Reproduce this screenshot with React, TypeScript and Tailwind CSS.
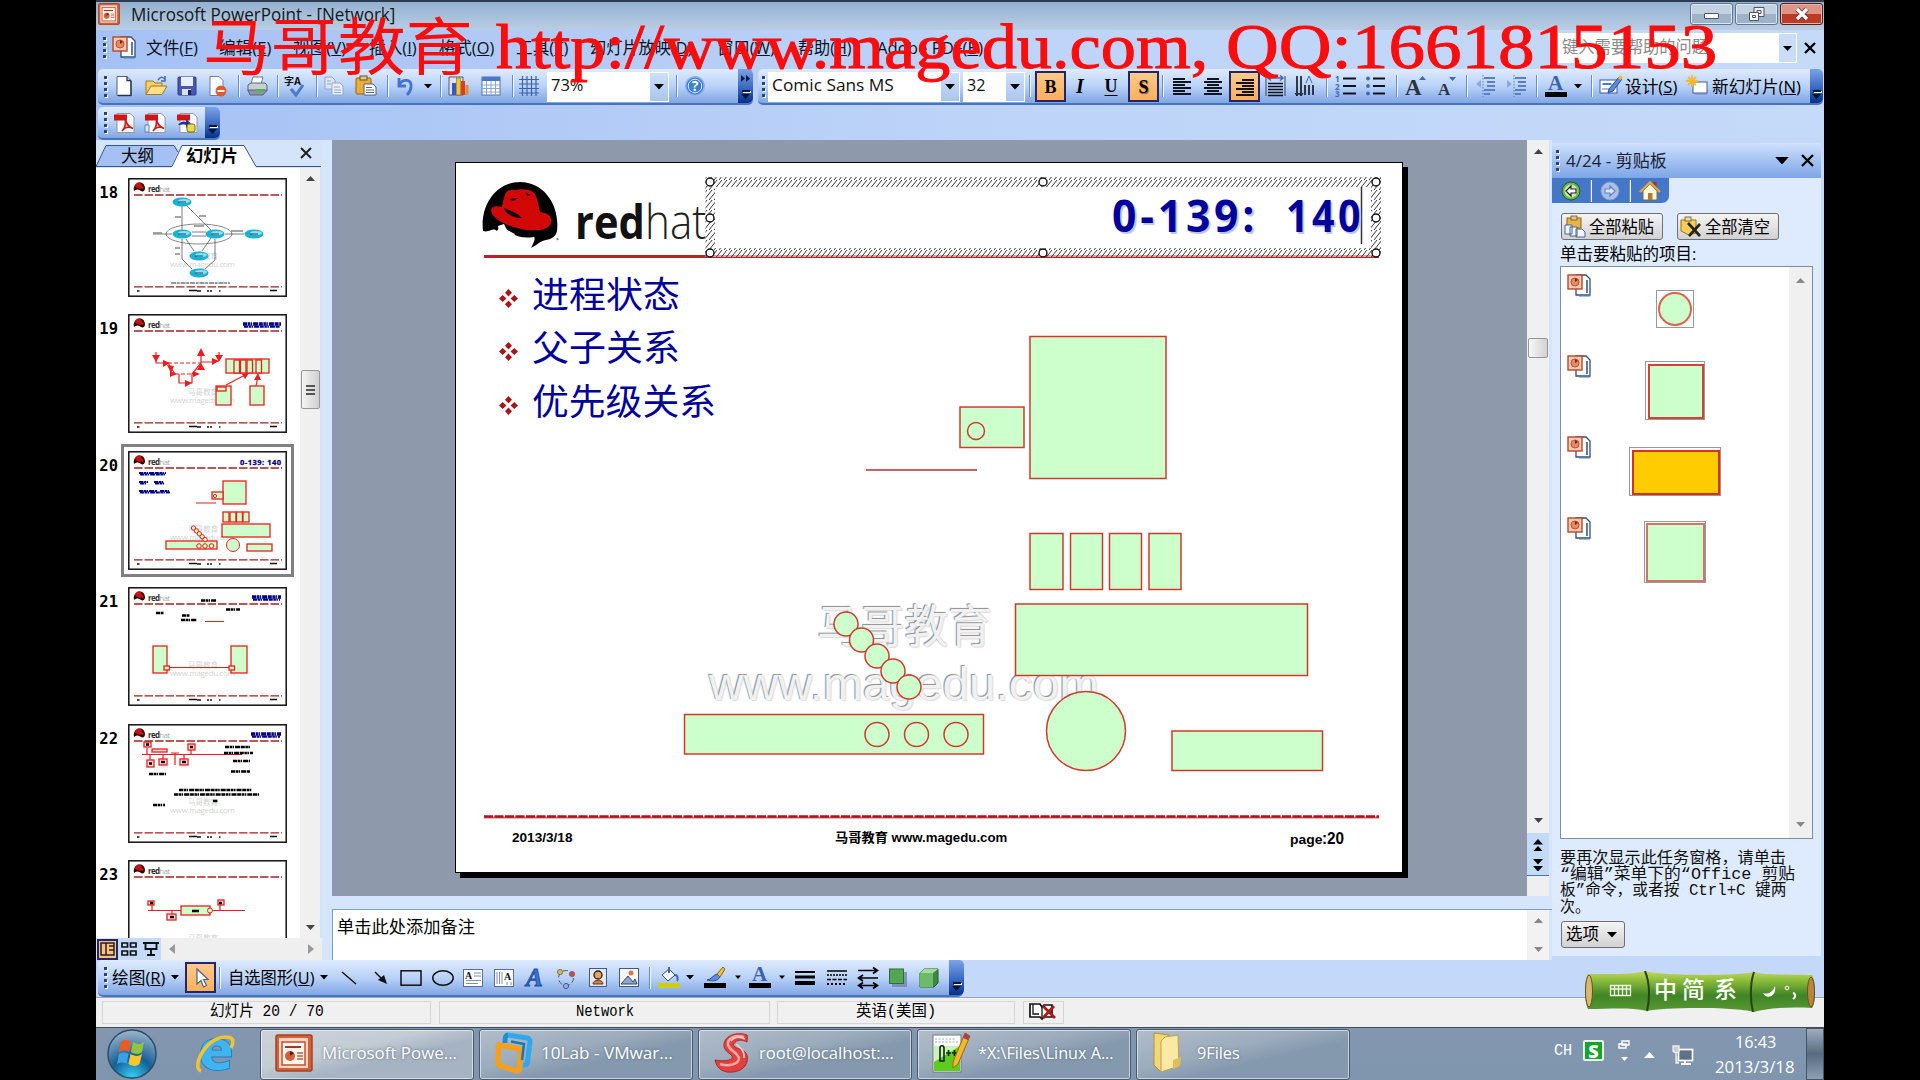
import React, { useLayoutEffect, useRef, useState } from "react";

type Kids = { children?: React.ReactNode };

/* Squeezes or stretches a line of text so that it fills exactly w pixels. */
function Fit({ w, c = "", children }: { w: number; c?: string } & Kids) {
  const ref = useRef<HTMLSpanElement>(null);
  const [k, setK] = useState(1);
  useLayoutEffect(() => {
    if (ref.current) setK(w / ref.current.offsetWidth);
  }, [w]);
  return (
    <span className={"block shrink-0 whitespace-nowrap " + c} style={{ width: w }}>
      <span ref={ref} className="inline-block origin-left" style={{ transform: `scaleX(${k})` }}>
        {children}
      </span>
    </span>
  );
}

const Cell = ({ c, children }: { c: string } & Kids) => (
  <div className={"flex shrink-0 items-center justify-center " + c}>{children}</div>
);
const Sep = ({ c }: { c: string }) => (
  <Cell c={c}>
    <div className="h-[22px] w-px bg-[#6a8ccb]" />
    <div className="h-[22px] w-px bg-[#f1f9ff]" />
  </Cell>
);
const Dots = ({ c }: { c: string }) => (
  <Cell c={c}>
    <div className="flex flex-col gap-[3px]">
      {[0, 1, 2, 3].map((i) => (
        <div key={i} className="h-[3px] w-[3px] bg-[#27417f] shadow-[1px_1px_0_#fff]" />
      ))}
    </div>
  </Cell>
);
const Tri = ({ c = "", up = false, s = 9, f = "#000" }: { c?: string; up?: boolean; s?: number; f?: string }) => (
  <svg width={s} height={s / 2 + 0.5} viewBox="0 0 10 5.5" className={c}>
    <path d={up ? "M0 5.5L5 0L10 5.5Z" : "M0 0L5 5.5L10 0Z"} fill={f} />
  </svg>
);
const Arr = ({ c }: { c: string }) => (
  <Cell c={c}>
    <Tri s={8} />
  </Cell>
);
const I = ({ w = 22, h = 22, c = "", children }: { w?: number; h?: number; c?: string } & Kids) => (
  <svg width={w} height={h} viewBox={`0 0 ${w} ${h}`} fill="none" className={"shrink-0 overflow-visible " + c}>
    {children}
  </svg>
);
const Cap = ({ more = false, c = "w-[15px]" }: { more?: boolean; c?: string }) => (
  <div
    className={
      "ml-auto flex shrink-0 flex-col items-center justify-end rounded-r-[5px] bg-linear-to-b from-[#7da3e6] via-[#3f6fc4] to-[#05308c] pb-1 " + c
    }
  >
    {more && (
      <svg width="10" height="7" viewBox="0 0 10 7" className="mb-auto mt-[6px]">
        <path d="M0 0L4 3.5L0 7ZM5 0L9 3.5L5 7Z" fill="#0a1a40" />
      </svg>
    )}
    <div className="mb-[2px] h-[2px] w-[8px] bg-[#0a1433] shadow-[1px_1px_0_#fff]" />
    <Tri s={9} f="#0a1433" />
  </div>
);
const bar = "flex items-stretch rounded-[5px] border-b-[2px] border-[#4674bd] bg-linear-to-b from-[#dfebfe] via-[#b9d2f8] to-[#80a6e4]";

const Hat = () => (
  <I w={76} h={68}>
    <path d="M1 50C-2 24 14 1 38 1C62 1 78 24 75 50C74 55 70 58 64 59C58 60 55 64 49 67C51 63 54 58 52 56C44 57 36 57 30 52C24 48 18 44 15 50C10 46 8 52 1 50Z" fill="#000" />
    <path d="M20 26C22 16 23 9 29 9C36 9 46 6 52 12C56 17 57 26 58 31C66 32 71 36 69 42C67 49 56 50 45 49C28 47 9 38 9 29C10 24 16 25 20 26Z" fill="#d00808" />
    <path d="M22 27C28 30 34 30 40 37C34 38 24 34 22 27ZM27 18L37 17L31 20ZM44 12L49 14L45 15Z" fill="#1a0000" />
    <path d="M16 45L22 43L25 49L33 53L30 56L24 55L17 52ZM41 58L47 58L44 60Z" fill="#fff" />
    <circle cx="75.5" cy="58" r="1.2" fill="#888" />
  </I>
);

const PptDoc = () => (
  <I w={24} h={24}>
    <path d="M9 2H19L23 6V22H9Z" fill="#fff" stroke="#2f4f7d" strokeWidth="1.3" />
    <path d="M12 22.5H23M20 7V20" stroke="#5a7ca8" strokeWidth="2" />
    <rect x="1" y="2" width="14" height="14" fill="#f6c9b4" stroke="#b4492a" strokeWidth="1.4" />
    <circle cx="8" cy="9" r="4" fill="#e58a64" stroke="#c4532f" />
    <path d="M8 9V5L11 7Z" fill="#7c2412" />
  </I>
);
const PptIcon = ({ s }: { s: number }) => (
  <svg width={s} height={s} viewBox="0 0 38 38" fill="none">
    <rect x="1" y="1" width="36" height="36" rx="2" fill="#d2603a" stroke="#a9401f" strokeWidth="1.5" />
    <rect x="4" y="4" width="29" height="30" fill="#f9d6c4" />
    <rect x="7" y="8" width="23" height="23" fill="#fff5ee" stroke="#c9593a" strokeWidth="1.6" />
    <path d="M10 13H26" stroke="#a03a1e" strokeWidth="2" />
    <circle cx="15" cy="22" r="5" fill="#d2603a" />
    <path d="M15 22V17L19 19Z" fill="#5c1808" />
    <path d="M22 19H28M22 22H28M22 25H28" stroke="#c9593a" strokeWidth="1.3" />
  </svg>
);

const menus: [string, string, number, string][] = [
  ["文件", "F", 52, "ml-[10px]"],
  ["编辑", "E", 52, "ml-[21px]"],
  ["视图", "V", 53, "ml-[22px]"],
  ["插入", "I", 48, "ml-[23px]"],
  ["格式", "O", 55, "ml-[22px]"],
  ["工具", "T", 52, "ml-[22px]"],
  ["幻灯片放映", "D", 102, "ml-[22px]"],
  ["窗口", "W", 58, "ml-[25px]"],
  ["帮助", "H", 54, "ml-[23px]"],
  ["Adobe PDF", "B", 106, "ml-[25px]"],
];

function TitleBar() {
  const btn = "flex h-[22px] w-[43px] items-center justify-center rounded-[3px] border border-[#5f7690] bg-linear-to-b from-[#c3d2e2] from-50% to-[#9db3ca] to-50% shadow-[inset_0_0_0_1px_#dce7f2]";
  return (
    <div className="flex h-[30px] shrink-0 border-t-[2px] border-[#2d3c50] bg-linear-to-b from-[#95b0d0] to-[#b9cee4]">
      <div className="ml-[2px] mt-[1px]"><PptIcon s={22} /></div>
      <Fit w={264} c="ml-[11px] text-[18px] leading-[25px] text-[#101820]">Microsoft PowerPoint - [Network]</Fit>
      <div className="ml-auto mr-px mt-px flex gap-[2px]">
        <div className={btn}><div className="mt-[4px] h-[6px] w-[15px] rounded-[1px] border border-[#4b5563] bg-white" /></div>
        <div className={btn}>
          <I w={18} h={16}>
            <path d="M6 1.5H16V10.5H6Z" fill="#eee" stroke="#4b5563" />
            <path d="M9 4.5H13V7.5H9Z" stroke="#4b5563" />
            <path d="M1.5 6.5H10.5V14.5H1.5Z" fill="#fff" stroke="#4b5563" />
            <path d="M4.500 9.500H7.500V11.500H4.500Z" stroke="#4b5563" />
          </I>
        </div>
        <div className="flex h-[22px] w-[43px] items-center justify-center rounded-[3px] border border-[#5b1d18] bg-linear-to-b from-[#dd9487] from-50% to-[#bd3a24] to-50% shadow-[inset_0_0_0_1px_#e9b3a8]">
          <I w={16} h={14}>
            <path d="M3 2L13 12M13 2L3 12" stroke="#5b3a3a" strokeWidth="5" />
            <path d="M3 2L13 12M13 2L3 12" stroke="#fff" strokeWidth="3.200" />
          </I>
        </div>
      </div>
    </div>
  );
}

function MenuBar() {
  return (
    <div className="flex h-[39px] shrink-0 items-start">
      <Dots c="mt-[6px] h-[22px] w-[16px]" />
      <div className="mt-[5px]"><PptDoc /></div>
      <div className="mt-[5px] flex text-[17px] leading-[25px] text-[#0c1220]">
        {menus.map(([t, k, w, m]) => (
          <Fit key={t} w={w} c={m}>{t}(<u>{k}</u>)</Fit>
        ))}
      </div>
      <div className="ml-auto mt-[3px] flex h-[30px] w-[239px] justify-between bg-white p-[1px] pl-[4px]">
        <Fit w={146} c="text-[17px] leading-[26px] text-[#8a8a8a]">键入需要帮助的问题</Fit>
        <div className="flex w-[17px] items-center justify-center bg-[#c9dcf8]"><Tri /></div>
      </div>
      <I w={12} h={12} c="ml-[7px] mr-[8px] mt-[12px]"><path d="M1 1L11 11M11 1L1 11" stroke="#000" strokeWidth="2.300" /></I>
    </div>
  );
}

const Combo = ({ c, t, w }: { c: string; t: string; w: number }) => (
  <div className={"mt-[3px] flex h-[30px] shrink-0 justify-between bg-white p-[1px] pl-[4px] " + c}>
    <Fit w={w} c="text-[17px] leading-[23px] text-[#111]">{t}</Fit>
    <div className="flex w-[18px] items-center justify-center bg-linear-to-b from-[#cddffa] to-[#a9c5ee]"><Tri s={10} /></div>
  </div>
);
const on = "mt-[2px] h-[31px] w-[31px] border-2 border-[#23236e] bg-linear-to-b from-[#fdc98a] to-[#fbb05a]";
const Lines = ({ d, s = "#10131c" }: { d: string; s?: string }) => (
  <I w={20} h={20}><path d={d} stroke={s} strokeWidth="1.800" /></I>
);

function Toolbars() {
  return (
    <div className="flex h-[36px] shrink-0 gap-[5px] pl-[2px] pr-px">
      <div className={bar + " w-[655px]"}>
        <Dots c="w-[14px]" />
        <Cell c="w-[24px]"><I><path d="M4 1.500H14L18 5.500V20.500H4Z" fill="#fff" stroke="#4d6185" /><path d="M14 1.500V5.500H18M5 20.500H18V6" stroke="#24324e" strokeWidth="1.300" /></I></Cell>
        <Cell c="w-[40px]"><I><path d="M1 19V6H8L10 8H17V11" fill="#f3cf6b" stroke="#a9791a" /><path d="M1 19.500L6 11H22L17 19.500Z" fill="#fde08a" stroke="#a9791a" /><path d="M13 5C16 1 19 2 20 5M20 1V6H16" stroke="#3f6cb5" strokeWidth="1.500" /></I></Cell>
        <Cell c="w-[22px]"><I><rect x="2" y="2" width="18" height="18" rx="1" fill="#4a55b5" stroke="#2f3a86" /><rect x="5" y="2" width="12" height="9" fill="#e9effc" /><rect x="6" y="14" width="9" height="6" fill="#d9dff0" /><rect x="12" y="15" width="3" height="5" fill="#1d2450" /></I></Cell>
        <Cell c="w-[40px]"><I><path d="M3 1.500H12L16 5.500V20.500H3Z" fill="#fff" stroke="#6d7f9e" /><circle cx="14" cy="16" r="5.500" fill="#df5a32" /><path d="M10.500 16H17.500" stroke="#fff" strokeWidth="2" /></I></Cell>
        <Sep c="w-[2px]" />
        <Cell c="w-[34px]"><I><path d="M7 2H17L15 9H5Z" fill="#fff" stroke="#6b7c8c" /><path d="M2 10L5 8H19L21 10V16H2Z" fill="#c6ced6" stroke="#5b6875" /><path d="M2 15L4 20H17L21 15Z" fill="#8b98a3" stroke="#5b6875" /><rect x="10" y="14" width="8" height="2.500" fill="#4eb646" /></I></Cell>
        <Sep c="w-[8px]" />
        <Cell c="w-[28px]"><I><text x="-1" y="10" fontSize="10" fontWeight="700" fill="#111">字A</text><path d="M6 14L11 20L18 10" stroke="#4a7ad0" strokeWidth="3" /></I></Cell>
        <Sep c="w-[13px]" />
        <Cell c="w-[22px]"><I><path d="M2 2H9L12 5V14H2Z" fill="#dde6f4" stroke="#93a7c8" /><path d="M9 8H17L20 11V20H9Z" fill="#e9eff9" stroke="#93a7c8" /><path d="M11 12H17M11 15H18M11 17.500H18M4 6H8M4 9H8" stroke="#93a7c8" /></I></Cell>
        <Cell c="w-[42px]"><I><rect x="1" y="3" width="15" height="16" rx="1" fill="#e9ae3a" stroke="#94650e" /><rect x="5" y="1" width="7" height="4" fill="#d8c59a" stroke="#6c5218" /><path d="M9 9H18L21 12V20H9Z" fill="#fff" stroke="#4e5f86" /><path d="M11 12.500H17M11 15H19M11 17.500H19" stroke="#54688f" /></I></Cell>
        <Sep c="w-[2px]" />
        <Cell c="w-[32px]"><I><path d="M5 3V11H12M5 10C9 3 18 4 17 12C17 15 15 18 13 20" stroke="#4274cf" strokeWidth="2.800" /></I></Cell>
        <Arr c="w-[13px]" />
        <Sep c="w-[14px]" />
        <Cell c="w-[22px]"><I><path d="M1 2H15V20H1Z" fill="#dfe4ee" stroke="#4f5d77" /><rect x="4" y="8" width="4" height="12" fill="#3757c4" /><rect x="8.500" y="3" width="4" height="17" fill="#f0c82e" stroke="#8c6d0c" strokeWidth=".6" /><rect x="13" y="6" width="4" height="14" fill="#db3b28" /><rect x="17.500" y="10" width="3" height="10" fill="#e98b2c" /></I></Cell>
        <Cell c="w-[42px]"><I><rect x="2" y="2" width="18" height="18" fill="#fff" stroke="#5670a8" /><rect x="2" y="2" width="18" height="4" fill="#4a78cf" /><path d="M2 10H20M2 13.500H20M2 17H20M6.500 6V20M11 6V20M15.500 6V20" stroke="#8ba5d3" /></I></Cell>
        <Sep c="w-[2px]" />
        <Cell c="w-[30px]"><I><path d="M4.500 1V21M9 1V21M13.500 1V21M18 1V21M1 4.500H21M1 9H21M1 13.500H21M1 18H21" stroke="#3d64b0" strokeWidth="1.200" /></I></Cell>
        <Combo c="ml-[3px] w-[122px]" t="73%" w={33} />
        <Sep c="w-[15px]" />
        <Cell c="w-[22px]"><I><circle cx="11" cy="11" r="9.300" fill="#3b7ddb" stroke="#8bb2ea" strokeWidth="1.500" /><circle cx="11" cy="11" r="6.800" stroke="#dcebff" /><text x="11" y="16" fontSize="14" fontWeight="700" textAnchor="middle" fill="#fff">?</text></I></Cell>
        <Cap more />
      </div>
      <div className={bar + " flex-1"}>
        <Dots c="w-[10px]" />
        <Combo c="w-[192px]" t="Comic Sans MS" w={122} />
        <Combo c="ml-[3px] w-[62px]" t="32" w={18} />
        <Sep c="w-[10px]" />
        <Cell c={on}><span className="font-['Liberation_Serif'] text-[18px] font-bold leading-none">B</span></Cell>
        <Cell c="w-[28px]"><span className="font-['Liberation_Serif'] text-[20px] font-bold italic leading-none">I</span></Cell>
        <Cell c="w-[34px]"><span className="font-['Liberation_Serif'] text-[18px] font-bold leading-none underline underline-offset-[3px]">U</span></Cell>
        <Cell c={on}><span className="font-['Liberation_Serif'] text-[18px] font-bold leading-none [text-shadow:1px_1px_1px_#7c5a2c]">S</span></Cell>
        <Sep c="w-[8px]" />
        <Cell c="w-[30px]"><Lines d="M1 3H13M1 6H19M1 9H13M1 12H19M1 15H13M1 18H19" /></Cell>
        <Cell c="w-[32px]"><Lines d="M4 3H16M1 6H19M4 9H16M1 12H19M4 15H16M1 18H19" /></Cell>
        <Cell c={on}><Lines d="M7 3H19M1 6H19M7 9H19M1 12H19M7 15H19M1 18H19" /></Cell>
        <Cell c="w-[31px]"><I><path d="M1 1V21M20 1V21" stroke="#39465f" /><path d="M3 3H18M6 0.500L3 3L6 5.500M15 .5L18 3L15 5.500" stroke="#3c69bd" strokeWidth="1.500" /><path d="M3 8.500H18M3 11.500H18M3 14.500H18M3 17.500H18M3 20.500H18" stroke="#10131c" strokeWidth="1.600" /></I></Cell>
        <Cell c="w-[28px]"><I><path d="M3 1V20M7 1V20M11 10V20M15 10V20M19 10V20" stroke="#10131c" strokeWidth="1.600" /><path d="M1 18L3 21L5 18M5 18L7 21L9 18" stroke="#10131c" /><path d="M12 8L15 1L18 8" stroke="#3c69bd" /></I></Cell>
        <Sep c="w-[16px]" />
        <Cell c="w-[22px]"><I><path d="M8 3.500H21M8 11H21M8 18.500H21" stroke="#10131c" strokeWidth="1.800" /><text x="0" y="7" fontSize="8" fontWeight="700" fill="#3c69bd">1</text><text x="0" y="14.500" fontSize="8" fontWeight="700" fill="#3c69bd">2</text><text x="0" y="22" fontSize="8" fontWeight="700" fill="#3c69bd">3</text></I></Cell>
        <Cell c="w-[38px]"><I><path d="M8 3.500H20M8 11H20M8 18.500H20" stroke="#10131c" strokeWidth="1.800" /><circle cx="3" cy="3.500" r="1.900" fill="#3c69bd" /><circle cx="3" cy="11" r="1.900" fill="#3c69bd" /><circle cx="3" cy="18.500" r="1.900" fill="#3c69bd" /></I></Cell>
        <Sep c="w-[4px]" />
        <Cell c="w-[34px]"><I><text x="0" y="20" fontSize="23" fontWeight="700" className="font-['Liberation_Serif']" fill="#2c3340">A</text><path d="M14 5L17.500 1L21 5Z" fill="#3c69bd" /></I></Cell>
        <Cell c="w-[28px]"><I><text x="2" y="20" fontSize="17" fontWeight="700" className="font-['Liberation_Serif']" fill="#2c3340">A</text><path d="M13 2L16.500 6L20 2Z" fill="#3c69bd" /></I></Cell>
        <Sep c="w-[12px]" />
        <Cell c="w-[26px]"><I><path d="M9 3H20M12 7H20M12 11H20M9 15H20M9 19H15" stroke="#5b7fc0" strokeWidth="1.800" /><path d="M8 0V22" stroke="#5b7fc0" strokeDasharray="1.500 1.500" /><path d="M6 5L1 9L6 13Z" fill="#8fa9d6" /></I></Cell>
        <Cell c="w-[36px]"><I><path d="M9 3H20M12 7H20M12 11H20M9 15H20M9 19H15" stroke="#5b7fc0" strokeWidth="1.800" /><path d="M8 0V22" stroke="#5b7fc0" strokeDasharray="1.500 1.500" /><path d="M1 5L6 9L1 13Z" fill="#8fa9d6" /></I></Cell>
        <Sep c="w-[4px]" />
        <Cell c="w-[34px]"><I><text x="3" y="15" fontSize="21" fontWeight="700" className="font-['Liberation_Serif']" fill="#3a62ae">A</text><rect x="0" y="17" width="22" height="5" fill="#000" /></I></Cell>
        <Arr c="w-[10px]" />
        <Sep c="w-[17px]" />
        <Cell c="w-[22px]"><I><rect x="0" y="5" width="17" height="13" fill="#fff" stroke="#3e5a96" /><rect x="2.500" y="8" width="9" height="2" fill="#4a78cf" /><path d="M2 14H12" stroke="#8ba5d3" strokeWidth="1.500" /><path d="M9 14L19 2L22 4L13 16L8 18Z" fill="#5b8ae0" stroke="#2c4d90" /><path d="M18 3L20 0L23 2L21 5Z" fill="#f1bd3c" /></I></Cell>
        <Fit w={52} c="ml-[3px] self-center text-[17px] leading-[25px]">设计(<u>S</u>)</Fit>
        <Cell c="ml-[9px] w-[22px]"><I><rect x="7" y="7" width="14" height="11" fill="#fff" stroke="#3e5a96" /><path d="M9 19H21" stroke="#7087b3" /><path d="M6 0V12M0 6H12M2 2L10 10M10 2L2 10" stroke="#f5b82e" strokeWidth="1.800" /></I></Cell>
        <Fit w={89} c="ml-[4px] self-center text-[17px] leading-[25px]">新幻灯片(<u>N</u>)</Fit>
        <Cap c="w-[13px]" />
      </div>
    </div>
  );
}

const Pdf = ({ k }: { k: number }) => (
  <I w={23} h={20}>
    <path d="M4 .5H17L21 4V19.500H4Z" fill="#fdfdfd" stroke="#9097a5" />
    <rect x="1" y="1.500" width="13" height="6" fill="#d31317" />
    {k < 2 && <path d="M12 5C13 10 15 14 20 15.500C16 13.500 12 14 9 18C12 15 13 10 12 5Z" fill="#f4b9b5" stroke="#c81d1d" strokeWidth="1.600" />}
    {k === 1 && <path d="M1 12H5V19H1Z" fill="#dce8fb" stroke="#5b80c6" />}
    {k === 2 && <path d="M2 12C5 8 8 8 10 9V6L15 10.500L10 15V12C7 11 5 12 2 12Z" fill="#1f2f9e" />}
    {k === 2 && <rect x="11" y="11" width="8" height="8" rx="2" fill="#e8dc4a" stroke="#77701a" />}
  </I>
);

function PdfBar() {
  return (
    <div className="flex h-[35px] shrink-0 pl-[2px] pt-[2px]">
      <div className={bar + " h-[33px] w-[122px]"}>
        <Dots c="w-[14px]" />
        <Cell c="w-[25px]"><Pdf k={0} /></Cell>
        <Cell c="w-[37px]"><Pdf k={1} /></Cell>
        <Cell c="w-[27px]"><Pdf k={2} /></Cell>
        <Cap />
      </div>
    </div>
  );
}

/* ---------- slide thumbnails ---------- */
const R = ({ r, f = "#ccffcc" }: { r: [number, number, number, number]; f?: string }) => (
  <rect x={r[0]} y={r[1]} width={r[2] - r[0]} height={r[3] - r[1]} fill={f} stroke="#ee1c1c" strokeWidth="1.300" />
);
const Blob = ({ d, f = "#000", s = 2.4 }: { d: string; f?: string; s?: number }) => (
  <path d={d} stroke={f} strokeWidth={s} strokeDasharray="4 .6 2.500 .5 1.500 1 5 .7" />
);
const Title = ({ x }: { x: number }) => (
  <>
    <Blob d={`M${x} 10H153`} f="#00008b" s={3.4} />
    <Blob d={`M${x + 1} 12.600H152`} f="#00008b" s={2.4} />
  </>
);
const red = "#ee1c1c";
const art: Record<number, React.ReactNode> = {
  18: (
    <>
      <ellipse cx="71" cy="56" rx="33" ry="10" stroke="#555" strokeWidth=".7" />
      <path d="M54 28V52M83 52L59 28M25 56H44M97 56H116M64 54H78M78 58H64M83 60L74 73M66 73L58 61M54 61V81L64 91M87 61V82L77 91" stroke="#444" strokeWidth=".7" />
      <path d="M25 55H34M47 39H53M71 38H78M103 53H115M47 70H52M47 76H52M66 48H76" stroke="#888" strokeWidth="1.300" />
      <path d="M43 105H102" stroke="#777" strokeWidth="1.400" strokeDasharray="5 .7 3 .8" />
      {[[54, 24], [54, 56], [87, 56], [126, 56], [71, 78], [71, 95]].map(([x, y]) => (
        <g key={`${x}-${y}`}>
          <ellipse cx={x} cy={y} rx="9.500" ry="4.500" fill="#19b2d4" />
          <ellipse cx={x + 2} cy={y - 1} rx="6" ry="2" fill="#8fe0ee" />
          <path d={`M${x - 4} ${y}H${x + 4}`} stroke="#134a5a" strokeWidth="1" />
        </g>
      ))}
    </>
  ),
  19: (
    <>
      <Title x={115} />
      <path d="M28 38V49H40L47 60M73 49V38M73 49L64 60V69H51V60M73 48H88M91 38V44" stroke={red} strokeWidth="1.200" />
      <path d="M40 49H73M47 60H67" stroke={red} strokeDasharray="4 2" />
      <path d="M24 41H32L28 48ZM35 46L42 49L35 53ZM39 51L46 52L43 59ZM42 57L49 60L42 63ZM69 42L73 34L77 42ZM69 56L73 49L77 56ZM84 44L91 47L84 51ZM87 41H95L91 48ZM65 57L72 60L65 63ZM57 66L64 69L57 73Z" fill={red} />
      <R r={[98, 45, 141, 59]} />
      {[106, 112.5, 119, 128].map((x) => <R key={x} r={[x, 46, x + 5.5, 59]} />)}
      <R r={[88, 72, 103, 91]} /><R r={[89, 73, 98, 77]} /><R r={[122, 72, 136, 91]} />
      <path d="M98 71L119 60M128 72L130 62" stroke={red} strokeWidth="1.200" />
      <path d="M114 60L121 59L117 65ZM126 66L130 59L133 66Z" fill={red} />
    </>
  ),
  20: (
    <>
      <text x="112" y="14" fontSize="7.500" fontWeight="700" fill="#00008b" stroke="#00008b" strokeWidth=".3" textLength="41">0-139: 140</text>
      <Blob d="M11 22H38M12 23.500H37M11 31H20M26 31H36M12 32.500H18M27 32.500H36M11 40H29M32 40H41M12 41.500H42" f="#00008b" s={2} />
      <R r={[95, 30, 118, 53]} /><R r={[84, 41, 95, 48]} /><circle cx="87" cy="45" r="1.600" stroke={red} />
      <path d="M68 52H88" stroke={red} />
      {[95, 102, 108.500, 115].map((x) => <R key={x} r={[x, 61, x + 6, 71]} />)}
      <R r={[94, 73, 142, 86]} /><circle cx="105" cy="94" r="6.500" fill="#cfc" stroke={red} />
      <R r={[38, 90, 89, 98]} /><R r={[119, 93, 144, 100]} />
      {[71, 77, 83.500].map((x) => <circle key={x} cx={x} cy="95" r="2.300" stroke={red} />)}
      {[0, 1, 2, 3, 4].map((i) => <circle key={i} cx={65.5 + i * 2.900} cy={77 + i * 2.900} r="2.200" fill="#cfc" stroke={red} />)}
    </>
  ),
  21: (
    <>
      <Title x={124} />
      <Blob d="M73 13.500H88M28 26H36M54 28.500H62M53 33H69M98 22.500H112" />
      <path d="M77 34.500H96M39 80.500H103" stroke={red} strokeWidth="1.200" />
      <R r={[25, 59, 39, 86]} /><R r={[103, 59, 119, 86]} /><R r={[36, 79, 41.500, 83]} /><R r={[101, 79, 106.500, 83]} />
    </>
  ),
  22: (
    <>
      <Title x={123} />
      <path d="M14 30.500H114M47 29V41M19 24V30M63 26V30M22 31V36M35 31V36M56 31V36M43 29H51" stroke={red} strokeWidth="1.200" />
      <R r={[16, 18, 23, 23]} f="#fdd" /><R r={[24, 25, 39, 28]} f="#fdd" /><R r={[60, 20, 67, 26]} f="#fdd" />
      <R r={[19, 36, 26, 43]} f="#fdd" /><R r={[31, 35, 39, 41]} f="#fdd" /><R r={[52, 35, 60, 41]} f="#fdd" />
      <path d="M18 20.500H21M62 23H65M21 39.500H24M33 38H37M54 38H58" stroke="#000" strokeWidth="2.500" />
      <Blob d="M97 23H122M96 29H125M105 37H122M103 47.500H122M21 50H38M51 66H124M46 70.500H131M85 77H90M25 81H37" />
    </>
  ),
  23: (
    <>
      <path d="M20 50.500H117M24 45V50M44 50V54M92 45V50" stroke={red} strokeWidth="1.200" />
      <R r={[53, 46, 82, 55]} /><circle cx="82" cy="50.500" r="2.500" fill="#cfc" stroke={red} />
      <R r={[20, 41, 26, 45]} f="#fdd" /><R r={[39, 54, 48, 60]} f="#fdd" /><R r={[90, 40, 96, 45]} f="#fdd" />
      <path d="M22 43H25M42 57H46M91 43H94M64 51H71" stroke="#000" strokeWidth="2.500" />
    </>
  ),
};

const Thumb = ({ n }: { n: number }) => (
  <svg width="159" height="119" viewBox="0 0 159 119" fill="none" className="block">
    <rect x=".8" y=".8" width="157.400" height="117.400" fill="#fff" stroke="#111" strokeWidth="1.500" />
    <path d="M6 13C4 4 16 1 17 10C17 13 15 14 13 13C10 11 8 11 6 13Z" fill="#300" />
    <path d="M7 8C9 3 13 3 14 8L16 10C13 12 8 10 7 8Z" fill="#c11" />
    <text x="20" y="13.500" fontSize="8" fill="#333" textLength="22" className="font-['Open_Sans']"><tspan fontWeight="700">red</tspan><tspan fill="#aaa">hat</tspan></text>
    <text x="60" y="81" fontSize="7.500" fill="#d4d4d4" textLength="30">马哥教育</text>
    {n < 23 && <text x="42" y="89" fontSize="8" fill="#d4d4d4" textLength="65">www.magedu.com</text>}
    {art[n]}
    <path d="M6 17H154M6 108.800H154" stroke="#a52020" strokeWidth="1.300" strokeDasharray="8.500 2" />
    <path d="M61 112.500H69M69 113H73M79 113H81M82 113H84M91 113H92.500M9 113H11.500M142 112.500H149" stroke="#111" strokeWidth="1.600" />
  </svg>
);

function LeftPane() {
  return (
    <div className="flex w-[226px] shrink-0 flex-col bg-[#d3e4fb] pt-[5px]">
      <div className="relative h-[23px]">
        <svg width="226" height="23" viewBox="0 0 226 23" fill="none" className="absolute inset-0">
          <path d="M0 21L10 1H79L82 6L75 22H0Z" fill="#a5c1f3" />
          <path d="M0 21.500L10 .5H78L82 7" stroke="#34558f" />
          <path d="M75 23L86 0.500H148L160 22V23Z" fill="#fff" />
          <path d="M0 21.500H76L86 .5H148L160 21.500H225" stroke="#34558f" />
        </svg>
        <div className="relative flex text-[17px] leading-[22px]">
          <Fit w={33} c="ml-[25px]">大纲</Fit>
          <Fit w={52} c="ml-[32px] font-bold">幻灯片</Fit>
          <I w={10} h={10} c="ml-[63px] mt-[3px]"><path d="M0 0L10 10M10 0L0 10" stroke="#222" strokeWidth="2" /></I>
        </div>
      </div>
      <div className="flex h-[770px]">
        <div className="h-full w-[204px] overflow-hidden bg-white pt-[3px]">
          {[18, 19, 20, 21, 22, 23].map((n) => (
            <div key={n} className="flex h-[136.400px] pt-[7px]">
              <div className="w-[24px] pr-[2px] text-right font-['DejaVu_Sans_Mono'] text-[15.500px] font-bold leading-[30px]">{n}</div>
              <div className={n === 20 ? "ml-[8px] h-[119px] outline-[3px] outline-offset-[4px] outline-[#808080]" : "ml-[8px]"}><Thumb n={n} /></div>
            </div>
          ))}
        </div>
        <div className="flex w-[20px] flex-col items-center bg-[#f0f0f0]">
          <Tri up s={9} f="#444" c="mt-[8px]" />
          <div className="mt-[189px] flex h-[39px] w-[19px] flex-col items-center justify-center gap-[2px] rounded-[2px] border border-[#979797] bg-linear-to-r from-[#f5f5f5] to-[#cfcfcf]">
            {[0, 1, 2].map((i) => <div key={i} className="h-[2px] w-[9px] bg-[#555]" />)}
          </div>
          <Tri s={9} f="#444" c="mb-[8px] mt-auto" />
        </div>
      </div>
      <div className="flex h-[22px] items-center">
        <Cell c="ml-px h-[21px] w-[21px] border-2 border-[#23236e] bg-[#fcc183]"><I w={15} h={14}><path d="M1 1H14V13H1ZM6 1V13M9 4H14M9 8H14" stroke="#222" strokeWidth="1.500" /></I></Cell>
        <Cell c="h-full w-[22px] bg-[#c4daf9]"><I w={16} h={14}><path d="M1 1H6.500V5H1ZM9.500 1H15V5H9.500ZM1 9H6.500V13H1ZM9.500 9H15V13H9.500Z" stroke="#111" strokeWidth="1.700" /></I></Cell>
        <Cell c="h-full w-[21px] bg-[#c4daf9]"><I w={16} h={14}><path d="M0 1H16M2.500 1V7H13.500V1M8 7V12M4 13H12" stroke="#111" strokeWidth="1.900" /></I></Cell>
        <div className="flex h-full flex-1 items-center justify-between bg-[#efefef] px-[8px]">
          <svg width="6" height="10"><path d="M6 0L0 5L6 10Z" fill="#999" /></svg>
          <svg width="6" height="10"><path d="M0 0L6 5L0 10Z" fill="#999" /></svg>
        </div>
      </div>
    </div>
  );
}

/* ---------- the slide being edited ---------- */
const At = ({ c, children }: { c: string } & Kids) => <div className={"absolute " + c}>{children}</div>;
const handles = [[711, 182], [1044, 182], [1377, 182], [711, 218], [1377, 218], [711, 253], [1044, 253], [1377, 253]];
const S = "#cf3a2c";
const Box = ({ x, y, x2, y2 }: { x: number; y: number; x2: number; y2: number }) => (
  <rect x={x} y={y} width={x2 - x} height={y2 - y} fill="#ccffcc" stroke={S} strokeWidth="1.500" />
);
const Bullet = ({ c, w, children }: { c: string; w: number } & Kids) => (
  <div className={"absolute left-[43px] flex items-center " + c}>
    <I w={19} h={19} c="mt-[6px]"><path d="M9.500 0L13 3.700L9.500 7.400L6 3.700ZM9.500 11.600L13 15.300L9.500 19L6 15.300ZM3.700 6L7.400 9.500L3.700 13L0 9.500ZM15.300 6L19 9.500L15.300 13L11.600 9.500Z" fill="#ab1414" /></I>
    <Fit w={w} c="ml-[14px] text-[36px] leading-[40px] text-[#00009a]">{children}</Fit>
  </div>
);

function Slide() {
  const emboss = "text-[#f1f1f1] [text-shadow:-1px_-1px_1px_#8c8c8c,1px_1px_1px_#dcdcdc]";
  return (
    <div className="relative ml-[122px] mt-[22px] h-[711px] w-[948px] border-[1.5px] border-black bg-white shadow-[5px_5px_0_#000]">
      <At c="left-[26px] top-[18px]"><Hat /></At>
      <At c="left-[119px] top-[34px] flex font-['Open_Sans'] text-[47px] leading-[48px]">
        <Fit w={70} c="font-bold text-[#111]">red</Fit>
        <Fit w={61} c="font-light text-[#222]">hat</Fit>
      </At>
      <At c="left-[28px] top-[92px] h-[3px] w-[895px] bg-[#b3242a]" />
      <Bullet c="top-[112px]" w={148}>进程状态</Bullet>
      <Bullet c="top-[165px]" w={148}>父子关系</Bullet>
      <Bullet c="top-[219px]" w={184}>优先级关系</Bullet>
      <At c="left-[361px] top-[438px]"><Fit w={175} c={"text-[45px] leading-[50px] " + emboss}>马哥教育</Fit></At>
      <At c="left-[253px] top-[493px]"><Fit w={390} c={"font-['Liberation_Sans'] text-[47px] leading-[56px] " + emboss}>www.magedu.com</Fit></At>
      <svg width="948" height="711" viewBox="456 162 948 711" fill="none" className="absolute -left-px -top-px">
        <defs>
          <pattern id="hatch" width="5" height="10" patternUnits="userSpaceOnUse">
            <path d="M-5 10L3 0M0 10L8 0" stroke="#333" strokeWidth="1" />
          </pattern>
        </defs>
        <path d="M706.500 177H1382V257H706.500Z" fill="#fff" fillOpacity=".3" />
        <path d="M706.500 177H1382V257H706.500ZM716 187V248H1372V187Z" fill="#fff" fillOpacity=".4" fillRule="evenodd" />
        <path d="M706.500 177H1382V257H706.500ZM716 187V248H1372V187Z" fill="url(#hatch)" fillRule="evenodd" />
        {handles.map(([x, y]) => <circle key={`${x}-${y}`} cx={x} cy={y} r="4" fill="#fff" stroke="#111" strokeWidth="1.400" />)}
        <path d="M1362.500 187V244" stroke="#333" strokeWidth="1.500" />
        <Box x={1031} y={336.5} x2={1167} y2={478.5} />
        <Box x={961} y={407} x2={1025} y2={447.5} />
        <circle cx="977" cy="431" r="8.500" stroke={S} strokeWidth="1.500" />
        <path d="M867 470H978" stroke="#c02a2a" strokeWidth="1.500" />
        <Box x={1031} y={533.5} x2={1064} y2={589.5} /><Box x={1071.5} y={533.5} x2={1103.5} y2={589.5} />
        <Box x={1110.5} y={533.5} x2={1142.5} y2={589.5} /><Box x={1150} y={533.5} x2={1182} y2={589.5} />
        <Box x={1016.5} y={604} x2={1308.5} y2={675.5} />
        {[[847, 624], [862.5, 640], [878, 656], [894, 671], [910, 687]].map(([x, y]) => <circle key={x} cx={x} cy={y} r="12" fill="#ccffcc" stroke={S} strokeWidth="1.500" />)}
        <Box x={685.5} y={714.5} x2={984.5} y2={754} />
        {[878, 917.5, 957].map((x) => <circle key={x} cx={x} cy="734.500" r="12" stroke={S} strokeWidth="1.500" />)}
        <circle cx="1087" cy="731" r="39.500" fill="#ccffcc" stroke={S} strokeWidth="1.500" />
        <Box x={1173} y={731} x2={1323.5} y2={770.5} />
        <path d="M485 817.500H1380" stroke="#c96a6e" strokeWidth="2" />
        <path d="M485 816.500H1380" stroke="#a8161e" strokeWidth="2.600" strokeDasharray="9 1.500" />
      </svg>
      <At c="left-[656px] top-[21px] flex font-['Open_Sans'] text-[45px] font-bold leading-[62px] tracking-[4px] text-[#00009a] [text-shadow:2px_2px_1px_#b9c6ea]">
        <Fit w={146}>0-139:</Fit>
        <Fit w={78} c="ml-[28px]">140</Fit>
      </At>
      <At c="left-[56px] top-[667px] font-['Liberation_Sans'] text-[12px] font-bold leading-[16px]"><Fit w={60}>2013/3/18</Fit></At>
      <At c="left-[379px] top-[666px] font-['Liberation_Sans','Noto_Sans_CJK_SC'] text-[13px] font-bold leading-[18px]"><Fit w={172}>马哥教育 www.magedu.com</Fit></At>
      <At c="left-[834px] top-[666px] flex items-baseline font-['Liberation_Sans'] text-[13px] font-bold leading-[20px]">
        <Fit w={32}>page</Fit>
        <Fit w={22} c="text-[16px]">:20</Fit>
      </At>
    </div>
  );
}

function Editor() {
  return (
    <div className="flex w-[1230px] shrink-0 flex-col bg-[#d5e5fb] pl-[10px]">
      <div className="flex h-[756px]">
        <div className="w-[1195px] border-l border-[#7f9bd0] bg-[#8e99ac]"><Slide /></div>
        <div className="flex w-[22px] flex-col items-center bg-[#d5e5fb]">
          <div className="flex h-[693px] w-full flex-col items-center bg-[#f0f0f0]">
            <Tri up s={9} f="#444" c="mt-[9px]" />
            <div className="mt-[184px] h-[20px] w-[20px] rounded-[2px] border border-[#979797] bg-linear-to-r from-[#f7f7f7] to-[#d2d2d2]" />
            <Tri s={9} f="#444" c="mb-[10px] mt-auto" />
          </div>
          <div className="flex h-[43px] w-full flex-col items-center border-b border-[#4674bd] bg-[#c4daf9] pt-[6px]">
            <Tri up s={10} /><Tri up s={10} c="mt-px" />
            <Tri s={10} c="mt-[8px]" /><Tri s={10} c="mt-px" />
          </div>
          <div className="w-full flex-1 bg-[#efefef]" />
        </div>
      </div>
      <div className="mt-[13px] flex h-[51px] border-l border-t border-[#7f9bd0]">
        <div className="w-[1194px] bg-white pl-[4px] pt-[4px]"><Fit w={138} c="text-[17px] leading-[25px]">单击此处添加备注</Fit></div>
        <div className="flex w-[22px] flex-col items-center justify-between bg-[#f2f2f2] py-[8px]">
          <Tri up s={9} f="#888" /><Tri s={9} f="#888" />
        </div>
      </div>
    </div>
  );
}

const paneBtn = "flex h-[27px] shrink-0 items-center rounded-[3px] border-[1.5px] border-[#707070] bg-linear-to-b from-[#f4f4f4] to-[#d2d2d2]";
const Clip = ({ h, children }: { h: string } & Kids) => (
  <div className={"relative flex justify-center " + h}>
    <div className="absolute -top-px left-[6px]"><PptDoc /></div>
    {children}
  </div>
);

function TaskPane() {
  return (
    <div className="mt-[3px] flex h-[813px] w-[269px] shrink-0 flex-col bg-[#deebfe]">
      <div className="flex h-[35px] items-center bg-linear-to-b from-[#cfe1fd] to-[#7da5e6]">
        <Dots c="w-[10px]" />
        <Fit w={101} c="ml-[4px] text-[17px] leading-[25px] text-[#1a2333]">4/24 - 剪贴板</Fit>
        <Tri s={14} c="ml-auto" />
        <I w={11} h={11} c="ml-[13px] mr-[8px]"><path d="M0 0L11 11M11 0L0 11" stroke="#000" strokeWidth="2.300" /></I>
      </div>
      <div className="flex h-[25px] w-[117px] shrink-0 rounded-br-[7px] bg-[#4577c8]">
        <Cell c="w-[38px]"><I w={20} h={20}><circle cx="10" cy="10" r="9" fill="#6cb84a" stroke="#245c1a" /><circle cx="10" cy="10" r="6.500" fill="#cde9b8" /><path d="M10 5L5 10L10 15V12H15V8H10Z" fill="#fff" stroke="#222" strokeWidth="1.200" /></I></Cell>
        <Sep c="w-[2px]" />
        <Cell c="w-[36px]"><I w={20} h={20}><circle cx="10" cy="10" r="9" fill="#a9bfe8" stroke="#7f9cd4" /><path d="M10 5L15 10L10 15V12H5V8H10Z" fill="#dce6f8" stroke="#6482ba" strokeWidth="1.200" /></I></Cell>
        <Sep c="w-[4px]" />
        <Cell c="w-[35px]"><I w={20} h={20}><rect x="13" y="1" width="3.500" height="7" fill="#a03a26" /><path d="M3 10V19H17V10L10 3Z" fill="#fff7e0" stroke="#8b6a34" /><path d="M0 11L10 1.500L20 11" stroke="#e0a83c" strokeWidth="2.400" /><rect x="8" y="12" width="4.500" height="7" fill="#b47a34" /></I></Cell>
      </div>
      <div className="mt-[10px] flex gap-[14px] pl-[9px]">
        <div className={paneBtn + " w-[102px] pl-[2px]"}>
          <I><rect x="3" y="2" width="14" height="10" fill="#e9b445" stroke="#8d6413" /><rect x="7" y="0" width="6" height="4" fill="#d9c99f" stroke="#6b5420" strokeWidth=".8" /><path d="M1 9H8V18H1ZM6 11H13V20H6ZM12 13H18L21 16V21H12Z" fill="#f2f7ff" stroke="#48628f" /></I>
          <Fit w={65} c="ml-[3px] text-[16.500px] leading-[22px]">全部粘贴</Fit>
        </div>
        <div className={paneBtn + " w-[102px] pl-[2px]"}>
          <I><path d="M1 4H16V17L9 19L1 15Z" fill="#f6ce59" stroke="#9a7216" /><rect x="5" y="1" width="6" height="4" fill="#e9dba6" stroke="#6b5420" strokeWidth=".8" /><path d="M8 7L20 20M20 8L9 20" stroke="#222" strokeWidth="2.600" /></I>
          <Fit w={65} c="ml-[3px] text-[16.500px] leading-[22px]">全部清空</Fit>
        </div>
      </div>
      <Fit w={136} c="ml-[8px] mt-px text-[16.500px] leading-[25px]">单击要粘贴的项目:</Fit>
      <div className="ml-[8px] flex h-[573px] w-[253px] shrink-0 border-[1.5px] border-[#7d8da8] bg-white">
        <div className="w-[228px] pt-[7px]">
          <Clip h="h-[81px]"><div className="mt-[16px] h-[38px] w-[38px] border border-[#999] p-px"><div className="h-full w-full rounded-full border-2 border-[#e0604e] bg-[#ccffcc]" /></div></Clip>
          <Clip h="h-[81px]"><div className="mt-[6px] h-[59px] w-[60px] border border-[#999] pl-[2px] pt-[2px]"><div className="h-full w-full border-2 border-[#cf4436] bg-[#ccffcc]" /></div></Clip>
          <Clip h="h-[81px]"><div className="mt-[11px] h-[49px] w-[92px] border border-[#999] pl-[2px] pt-[2px]"><div className="h-full w-full border-2 border-[#d8321c] bg-[#ffcc00]" /></div></Clip>
          <Clip h="h-[81px]"><div className="mt-[4px] h-[62px] w-[62px] border border-[#999] pl-px pt-px"><div className="h-full w-full border-2 border-[#cf7468] bg-[#ccffcc]" /></div></Clip>
        </div>
        <div className="flex flex-1 flex-col items-center justify-between bg-[#f0f0f0] py-[11px]"><Tri up s={9} f="#888" /><Tri s={9} f="#888" /></div>
      </div>
      <div className="ml-[8px] mt-[12px] font-['Liberation_Mono','Noto_Sans_CJK_SC'] text-[16px] leading-[16.200px] text-[#101010]">
        <Fit w={226}>要再次显示此任务窗格，请单击</Fit>
        <Fit w={235}>“编辑”菜单下的“Office 剪贴</Fit>
        <Fit w={226}>板”命令，或者按 Ctrl+C 键两</Fit>
        <Fit w={30}>次。</Fit>
      </div>
      <div className={paneBtn + " ml-[9px] mt-[5px] h-[25px] w-[64px] pl-[4px]"}>
        <Fit w={33} c="text-[16.500px] leading-[22px]">选项</Fit>
        <Tri s={10} c="ml-[8px]" />
      </div>
    </div>
  );
}

function DrawBar() {
  return (
    <div className="flex h-[37px] shrink-0 bg-[#c4d9f9] pl-[2px]">
      <div className={bar + " w-[865px]"}>
        <Dots c="w-[14px]" />
        <Fit w={54} c="self-center text-[17px] leading-[25px]">绘图(<u>R</u>)</Fit>
        <Arr c="w-[18px]" />
        <Cell c={on + " ml-px"}><I><path d="M7 2V17L11 13.500L13.500 20L16.500 18.500L13.500 12.500H18Z" fill="#fff" stroke="#4c628f" strokeWidth="1.200" /></I></Cell>
        <Sep c="w-[8px]" />
        <Fit w={86} c="ml-[4px] self-center text-[17px] leading-[25px]">自选图形(<u>U</u>)</Fit>
        <Arr c="w-[19px]" />
        <Cell c="w-[32px]"><I w={16} h={16}><path d="M1 2L15 14" stroke="#111" strokeWidth="1.500" /></I></Cell>
        <Cell c="w-[32px]"><I w={16} h={16}><path d="M2 2L10 10" stroke="#111" strokeWidth="1.500" /><path d="M14 14L5 10L11 5Z" fill="#111" /></I></Cell>
        <Cell c="w-[28px]"><I w={22} h={16}><rect x="1" y=".8" width="20" height="14.400" stroke="#111" strokeWidth="1.500" /></I></Cell>
        <Cell c="w-[36px]"><I w={22} h={16}><ellipse cx="11" cy="8" rx="10.200" ry="7.200" stroke="#111" strokeWidth="1.500" /></I></Cell>
        <Cell c="w-[24px]"><I w={20} h={18}><rect x=".5" y=".5" width="19" height="17" fill="#fff" stroke="#5b6f96" /><text x="2" y="10" fontSize="10" fontWeight="700" fill="#111" className="font-['Liberation_Serif']">A</text><path d="M11 4H18M11 7H18M3 11.500H18M3 14.500H15" stroke="#7b90ba" /></I></Cell>
        <Cell c="w-[38px]"><I w={20} h={18}><rect x=".5" y=".5" width="19" height="17" fill="#fff" stroke="#5b6f96" /><text x="10" y="11" fontSize="10" fontWeight="700" fill="#111" className="font-['Liberation_Serif']">A</text><path d="M3 3V15M5.500 3V15M8 3V15M13 13V16M17 13V16" stroke="#7b90ba" /></I></Cell>
        <Cell c="w-[24px]"><I w={20} h={20}><text x="1" y="18" fontSize="25" fontWeight="700" fontStyle="italic" fill="#3b74d6" stroke="#2450a0" strokeWidth="1" className="font-['Liberation_Serif']">A</text></I></Cell>
        <Cell c="w-[38px]"><I w={20} h={20}><circle cx="10" cy="10" r="7.500" stroke="#555" strokeDasharray="5 3" /><circle cx="4" cy="4" r="2.600" fill="#d9bc4a" stroke="#555" strokeWidth=".7" /><circle cx="16" cy="6" r="2.600" fill="#d34c3c" stroke="#555" strokeWidth=".7" /><circle cx="10" cy="18" r="2.600" fill="#8fb1e8" stroke="#335" strokeWidth=".7" /></I></Cell>
        <Cell c="w-[26px]"><I w={18} h={19}><rect x=".5" y=".5" width="17" height="18" fill="#e3e8f2" stroke="#44597f" /><circle cx="9" cy="7" r="4" fill="#e8a15a" stroke="#222" strokeWidth="1.300" /><path d="M4 16C4 11 14 11 14 16Z" fill="#e07b28" stroke="#633" /></I></Cell>
        <Cell c="w-[36px]"><I w={20} h={19}><rect x=".5" y=".5" width="19" height="18" fill="#f5f8fe" stroke="#44597f" /><path d="M2 16L9 8L14 14L16 11L18 16Z" fill="#8ea6cc" stroke="#2f4674" /><circle cx="12" cy="5" r="2.500" fill="#e8743a" /></I></Cell>
        <Sep c="w-[6px]" />
        <Cell c="w-[32px]"><I><path d="M4 8L11 2L17 8L10 14Z" fill="#f4f7fb" stroke="#39496b" /><path d="M11 6V0M17 8C20 8 20 13 19 14" stroke="#3c69bd" strokeWidth="2" /><rect x="0" y="16" width="22" height="5" fill="#c9cf12" /></I></Cell>
        <Arr c="w-[10px]" />
        <Cell c="w-[40px]"><I><path d="M3 13C7 13 9 8 13 7L16 10C13 15 8 14 3 13Z" fill="#5b8ae0" stroke="#2c4d90" /><path d="M13 7L19 0L21 2L16 10Z" fill="#f1bd3c" stroke="#8a6514" /><rect x="0" y="16" width="22" height="5" fill="#000" /></I></Cell>
        <Arr c="w-[6px]" />
        <Cell c="w-[38px]"><I><text x="3" y="14" fontSize="21" fontWeight="700" className="font-['Liberation_Serif']" fill="#3a62ae">A</text><rect x="0" y="16" width="22" height="5" fill="#000" /></I></Cell>
        <Arr c="w-[6px]" />
        <Cell c="w-[40px]"><I><path d="M1 5H21" stroke="#000" strokeWidth="2" /><path d="M1 10H21" stroke="#000" strokeWidth="3" /><path d="M1 16H21" stroke="#000" strokeWidth="4" /></I></Cell>
        <Cell c="w-[24px]"><I><path d="M1 4H21" stroke="#000" strokeWidth="1.500" /><path d="M1 8H21" stroke="#000" strokeWidth="1.500" strokeDasharray="2 1" /><path d="M1 12.500H21" stroke="#000" strokeWidth="1.500" strokeDasharray="4 1.500" /><path d="M1 17H21" stroke="#000" strokeWidth="2" strokeDasharray="2 2" /></I></Cell>
        <Cell c="w-[38px]"><I><path d="M1 3.500H20M16 .5L20.500 3.500L16 6.500M21 11H2M6 8L1.500 11L6 14M2 18.500H20M6 15.500L1.500 18.500L6 21.500M16 15.500L20.500 18.500L16 21.500" stroke="#000" strokeWidth="1.600" /></I></Cell>
        <Cell c="w-[22px]"><I w={18} h={20}><rect x="3" y="4" width="15" height="15" fill="#7486a6" opacity=".8" /><rect x=".5" y="1" width="14" height="14.500" fill="#55a556" stroke="#2d6e33" /></I></Cell>
        <Cell c="w-[40px]"><I w={20} h={20}><path d="M1 5L5 1H19V15L15 19H1Z" fill="#3c8a40" stroke="#24612a" /><rect x="1" y="5" width="13" height="14" fill="#6dbb69" /><path d="M1 5L5 1H19L14 5Z" fill="#a6dba0" /></I></Cell>
        <Cap />
      </div>
    </div>
  );
}

function StatusBar() {
  const cell = "flex h-[23px] items-center justify-center border-[1.5px] border-[#d6d6d6]";
  return (
    <div className="flex h-[30px] shrink-0 items-center border-t border-[#9aa6ba] bg-[#f0f0f0] pl-[6px] font-['Liberation_Mono','Noto_Sans_CJK_SC'] text-[16px] leading-[22px]">
      <div className={cell + " w-[329px] pb-[2px]"}><Fit w={114}>幻灯片 20 / 70</Fit></div>
      <div className={cell + " ml-[8px] w-[331px] pb-[2px]"}><Fit w={58}>Network</Fit></div>
      <div className={cell + " ml-[7px] w-[238px] pb-[2px]"}><Fit w={80}>英语(美国)</Fit></div>
      <div className={cell + " ml-[8px] w-[41px] pb-[4px] pr-[3px]"}>
        <I w={28} h={18}><path d="M2 2V15H12L14 17L16 15H24V3H16L14 5L12 2Z" fill="#fff" stroke="#111" strokeWidth="1.700" /><path d="M14 5V16M5 2V12H11" stroke="#111" strokeWidth="1.300" /><path d="M15 4L27 16M26 4L15 16" stroke="#b01818" strokeWidth="2.800" /></I>
      </div>
    </div>
  );
}

const Orb = () => (
  <I w={50} h={50}>
    <defs>
      <radialGradient id="orb" cx=".5" cy="1" r="1">
        <stop offset="0" stopColor="#35d4f8" /><stop offset=".45" stopColor="#155f96" /><stop offset="1" stopColor="#9fb6cc" />
      </radialGradient>
    </defs>
    <circle cx="25" cy="25" r="24" fill="url(#orb)" stroke="#2e4b69" strokeWidth="1.500" />
    <path d="M14 13C18 10 21 11 24 13L22 23C19 21 16 21 12 23Z" fill="#ee5a24" />
    <path d="M26 13C29 15 33 16 37 13L35 23C31 26 27 25 24 23Z" fill="#8fc63d" />
    <path d="M12 25C15 23 19 23 21.500 25L19.500 35C17 33 14 33 10 35Z" fill="#3aa0e8" />
    <path d="M23.500 25C27 27 31 28 35 25L32.500 35C29 38 25 37 21.500 35Z" fill="#fbc62d" />
  </I>
);
const VmIcon = () => (
  <I w={38} h={42}>
    <path d="M14 3L33 6C35 6.500 36 8 36 10L33.500 30C33 33 32 33 29 33" stroke="#2ea9ee" strokeWidth="5" strokeLinejoin="round" />
    <path d="M14 3C11 3 11 6 11 9V11" stroke="#1a8fd6" strokeWidth="5" />
    <path d="M4.500 13L25 16.500C27 17 27.500 18 27 20L25 37C24.500 39 23 39 21 38.500L6 33.500C4 33 4 32 4 30Z" stroke="#f5a01c" strokeWidth="5.500" strokeLinejoin="round" />
    <path d="M17 9.500L30 12L28 28" stroke="#1579c0" strokeWidth="2.500" />
  </I>
);
const ShellIcon = () => (
  <I w={38} h={42}>
    <path d="M34 3C22 -1 10 5 11 14C12 20 17 21 19 24C21 28 12 30 2 28C4 38 12 41 20 40C31 39 36 31 34 23C32 17 24 18 20 13C24 6 30 8 34 10C34 7 35 5 34 3Z" fill="#df4141" stroke="#b82323" />
    <path d="M31 5C23 2 14 6 15 13C17 19 24 20 26 26C26 32 16 35 7 32" stroke="#f8a8a2" strokeWidth="2.500" />
    <path d="M23 12C27 15 32 19 31 26M18 9C22 4 28 5 32 7" stroke="#fbd0cb" strokeWidth="1.500" />
  </I>
);
const apps: [string, number, string, React.ReactNode][] = [
  ["Microsoft Powe...", 135, "ml-[9px]", <PptIcon s={38} />],
  ["10Lab - VMwar...", 132, "ml-[9px]", <VmIcon />],
  ["root@localhost:...", 135, "ml-[8px]", <ShellIcon />],
  ["*X:\\Files\\Linux A...", 136, "ml-[8px]", <I w={38} h={42}><rect x="1" y="3" width="28" height="37" fill="#fdfdfd" stroke="#6c7a80" /><rect x="2" y="14" width="26" height="25" fill="#5ecb1e" /><path d="M2 14H28L2 30Z" fill="#e8f9dd" opacity=".8" /><path d="M3 3H27M3 7H24M3 10H26" stroke="#9fb0b8" strokeDasharray="2 1.500" /><path d="M8 29V16C8 13 12 13 12 16V29ZM14 21H19M16.500 18V24M20 21H25M22.500 18V24" stroke="#0c2a0c" strokeWidth="1.600" /><path d="M33 1L38 4L26 32L21 36L21 30Z" fill="#f5b82a" stroke="#9c6a10" /><path d="M33 1L38 4L36 8L31 6Z" fill="#b23a52" /></I>],
  ["9Files", 43, "ml-[8px]", <I w={38} h={42}><path d="M3 1L18 3V33L10 40L3 33Z" fill="#f2d777" stroke="#b3923a" /><path d="M14 5L27 3L28 34L10 40V9Z" fill="#f9e9a4" stroke="#c0a149" /><path d="M22 28L30 25L29 34L22 37Z" fill="#dfbe5a" /></I>],
];

function TaskBar() {
  return (
    <div className="flex h-[53px] shrink-0 items-center border-t border-[#3c4a5c] bg-linear-to-b from-[#8396b0] to-[#7f95ae] text-white">
      <Cell c="w-[72px]"><Orb /></Cell>
      <Cell c="w-[92px] pl-[3px]">
        <I w={42} h={42}>
          <text x="3" y="37" fontSize="56" fontWeight="800" fill="#3fb4ee" stroke="#1b7fc4" strokeWidth=".8" className="font-['Open_Sans']" textLength="36" lengthAdjust="spacingAndGlyphs">e</text>
          <path d="M6 38C-5 34 14 -2 36 5C39 7 38 11 36 15" stroke="#f3c22f" strokeWidth="3.500" />
        </I>
      </Cell>
      <div className="flex gap-[5px]">
        {apps.map(([t, w, m, icon], i) => (
          <div
            key={t}
            className={
              "flex h-[51px] w-[214px] items-center rounded-[3px] border border-[#4a5a6e] pb-[2px] pl-[14px] shadow-[inset_0_0_0_1px_rgba(255,255,255,0.55)] " +
              (i === 0 ? "bg-linear-to-br from-[#ccd3da] via-[#c3cbd3] via-40% to-[#a5b3c3] to-60%" : "bg-linear-to-br from-[#b0bdca] via-[#9cacbd] via-40% to-[#8599ae] to-60%")
            }
          >
            {icon}
            <Fit w={w} c={"text-[17px] leading-[26px] text-white [text-shadow:0_0_3px_#56687e] " + m}>{t}</Fit>
          </div>
        ))}
      </div>
      <div className="ml-auto flex h-full items-center">
        <Fit w={18} c="font-['Liberation_Mono'] text-[16px] leading-[20px] -mt-[6px]">CH</Fit>
        <div className="-mt-[7px] ml-[11px] flex h-[21px] w-[21px] items-center justify-center rounded-[2px] border-2 border-[#e8f5e8] bg-[#14a52c] text-[18px] font-extrabold leading-none">S</div>
        <div className="-mt-[8px] ml-[14px] flex w-[12px] flex-col items-center gap-[8px]">
          <I w={12} h={9}><path d="M4 1H11V5H4ZM1 4H8V8H1Z" stroke="#fff" strokeWidth="1.400" /></I>
          <Tri s={7} f="#fff" />
        </div>
        <Tri up s={11} f="#fff" c="ml-[14px] mt-[2px]" />
        <I w={22} h={21} c="ml-[17px] mt-[2px]">
          <rect x="6.500" y="4.500" width="14" height="11" fill="#5d7188" stroke="#fff" strokeWidth="1.700" /><path d="M9 19H19M13 16V19" stroke="#fff" strokeWidth="2" /><path d="M1 1H7V6C7 8 1 8 1 6ZM4 8V18H7" fill="#ccc" stroke="#eee" strokeWidth="1.300" />
        </I>
        <div className="ml-[21px] flex w-[80px] flex-col items-center pb-px text-[17px] leading-[25px]">
          <Fit w={41}>16:43</Fit>
          <Fit w={80}>2013/3/18</Fit>
        </div>
        <div className="ml-[11px] h-full w-[18px] border border-[#45566b] bg-linear-to-b from-[#9fadbd] via-[#596b80] to-[#8d9fb3]" />
      </div>
    </div>
  );
}

const Bamboo = () => (
  <div className="absolute left-[1585px] top-[971px] h-[41px] w-[230px]">
    <svg width="230" height="41" viewBox="0 0 230 41" fill="none" className="absolute inset-0">
      <defs>
        <linearGradient id="bam" x1="0" y1="0" x2="0" y2="1">
          <stop offset="0" stopColor="#c5da5e" /><stop offset=".25" stopColor="#86b93a" /><stop offset=".6" stopColor="#3f8426" /><stop offset="1" stopColor="#5a9a34" />
        </linearGradient>
      </defs>
      <path d="M3 3C25 3 45 4 60 0C80 5 150 5 169 1C185 5 210 3 227 4C231 10 231 32 227 37C210 36 185 36 169 41C150 36 80 36 62 40C45 36 25 38 3 38C-1 30 -1 10 3 3Z" fill="url(#bam)" />
      <ellipse cx="4" cy="20" rx="3.500" ry="16" fill="#d9b872" stroke="#64551f" />
      <ellipse cx="226" cy="21" rx="3.500" ry="15" fill="#b8863c" stroke="#64551f" />
      <path d="M60 0C65 12 65 28 62 40M169 1C165 12 165 30 168 41" stroke="#27430f" strokeWidth="2" />
      <path d="M25.500 14.500H45.500V24.500H25.500ZM25.500 18H45.500M29.500 14V25M33.500 14V25M37.500 14V25M41.500 14V25" stroke="#eef6e2" strokeWidth="1.300" />
      <path d="M190 15C192 26 181 29 178 22C183 24 188 21 190 15Z" fill="#fff" />
      <circle cx="202" cy="17" r="1.800" stroke="#fff" />
      <path d="M208 22C211 23 211 26 208 28" stroke="#fff" strokeWidth="2" />
    </svg>
    <div className="absolute left-[69px] top-[3px] flex gap-[6px] text-[23px] font-medium leading-[30px] text-white">
      <span>中</span><span className="ml-[-1px]">简</span><span className="ml-[3px]">系</span>
    </div>
  </div>
);

const mark = "absolute leading-[64px] text-[#fb0d0d]";

export default function App() {
  return (
    <div className="relative h-[1080px] w-[1920px] overflow-hidden bg-black font-['Open_Sans','Noto_Sans_CJK_SC',sans-serif] text-black">
      <div className="mx-[96px] flex h-full flex-col bg-linear-to-r from-[#a5c1f4] via-[#bdd3f8] to-[#c5daf9]">
        <TitleBar />
        <MenuBar />
        <Toolbars />
        <PdfBar />
        <div className="flex h-[820px] shrink-0 bg-[#c4d9f9]">
          <LeftPane />
          <Editor />
          <TaskPane />
        </div>
        <DrawBar />
        <StatusBar />
        <TaskBar />
      </div>
      <Bamboo />
      <div className={mark + " left-[203px] top-[14px] text-[62px]"}><Fit w={270}>马哥教育</Fit></div>
      <div className={mark + " left-[496px] top-[15px] font-['Liberation_Serif'] text-[64px] [-webkit-text-stroke:1px_#fb0d0d]"}><Fit w={712}>http://www.magedu.com,</Fit></div>
      <div className={mark + " left-[1226px] top-[15px] font-['Liberation_Serif'] text-[64px] [-webkit-text-stroke:1px_#fb0d0d]"}><Fit w={491}>QQ:1661815153</Fit></div>
    </div>
  );
}
